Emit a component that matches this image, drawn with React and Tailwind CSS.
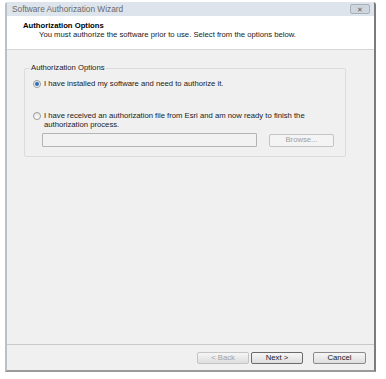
import React from 'react';

const Radio = ({ checked }) => (
  <span className="relative inline-flex h-[8px] w-[8px] shrink-0 items-center justify-center rounded-full border border-[#9a9a9a] bg-gradient-to-b from-[#e6e6e6] to-[#ffffff]">
    {checked && <span className="h-[4px] w-[4px] rounded-full bg-[#2a6fb8]" />}
  </span>
);

const Button = ({ children, disabled, primary }) => (
  <div
    className={
      'flex h-[12px] items-center justify-center rounded-[2px] border bg-gradient-to-b from-[#f6f6f6] to-[#dedede] ' +
      (disabled
        ? 'border-[#c4c4c4] text-[#a2a2a2]'
        : primary
        ? 'border-[#6a6a6a] text-[#1a1a1a]'
        : 'border-[#8a8a8a] text-[#1a1a1a]')
    }
  >
    {children}
  </div>
);

const App = () => {
  return (
    <div
      className="h-[379px] w-[386px] overflow-hidden bg-white pl-[5px] pt-[2px] text-[7.7px] leading-none"
      style={{ fontFamily: '"Liberation Sans", Arial, sans-serif' }}
    >
      <div className="flex h-[370px] w-[371px] flex-col rounded-t-[3px] border-l-[2px] border-r-[2px] border-b-[2px] border-l-[#b8c0c8] border-r-[#7c7c7c] border-b-[#9a9a9a] bg-[#f0f0f0]">
        {/* title bar */}
        <div className="flex h-[14px] items-center justify-between bg-[#dde4ec] pl-[5px] pr-[4px]">
          <span className="text-[8.3px] text-[#6a6a6a]">Software Authorization Wizard</span>
          <div className="flex h-[10px] w-[20px] items-center justify-center rounded-[2px] border border-[#a8b0b8] bg-[#cfd6de] text-[7px] text-[#606060]">
            ✕
          </div>
        </div>

        {/* header */}
        <div className="flex h-[34px] flex-col gap-[1px] border-b border-[#d6d6d6] bg-white pl-[16px] pt-[6px]">
          <span className="font-bold text-black">Authorization Options</span>
          <span className="pl-[16px] text-[#1a1a1a]">
            You must authorize the software prior to use. Select from the options below.
          </span>
        </div>

        {/* body */}
        <div className="flex-1 pl-[17px] pt-[18px]">
          <div className="relative h-[89px] w-[322px] rounded-[2px] border border-[#dcdcdc] pt-[11px] pl-[8px]">
            <span className="absolute left-[5px] top-[-5px] bg-[#f0f0f0] px-[1px] text-[#1a1a1a]">
              Authorization Options
            </span>
            <div className="flex items-center gap-[3px] text-[#1a1a1a]">
              <Radio checked />
              <span>I have installed my software and need to authorize it.</span>
            </div>
            <div className="mt-[23px] flex items-start gap-[3px] text-[#1a1a1a]">
              <span className="mt-[1px]">
                <Radio />
              </span>
              <span className="leading-[9px]">
                I have received an authorization file from Esri and am now ready to finish the
                <br />
                authorization process.
              </span>
            </div>
            <div className="mt-[4px] flex items-center gap-[12px] pl-[9px]">
              <div className="h-[14px] w-[215px] rounded-[1px] border border-[#b4b4b4] bg-[#f2f2f2]" />
              <div className="flex h-[13px] w-[65px] items-center justify-center rounded-[2px] border border-[#c4c4c4] bg-[#f4f4f4] text-[#a0a0a0]">
                Browse...
              </div>
            </div>
          </div>
        </div>

        {/* footer */}
        <div className="flex h-[26px] items-center justify-end border-t border-[#c8c8c8] pr-[8px]">
          <div className="w-[52px]">
            <Button disabled>&lt; Back</Button>
          </div>
          <div className="ml-[2px] w-[52px]">
            <Button primary>Next &gt;</Button>
          </div>
          <div className="ml-[10px] w-[53px]">
            <Button>Cancel</Button>
          </div>
        </div>
      </div>
    </div>
  );
};

export default App;
